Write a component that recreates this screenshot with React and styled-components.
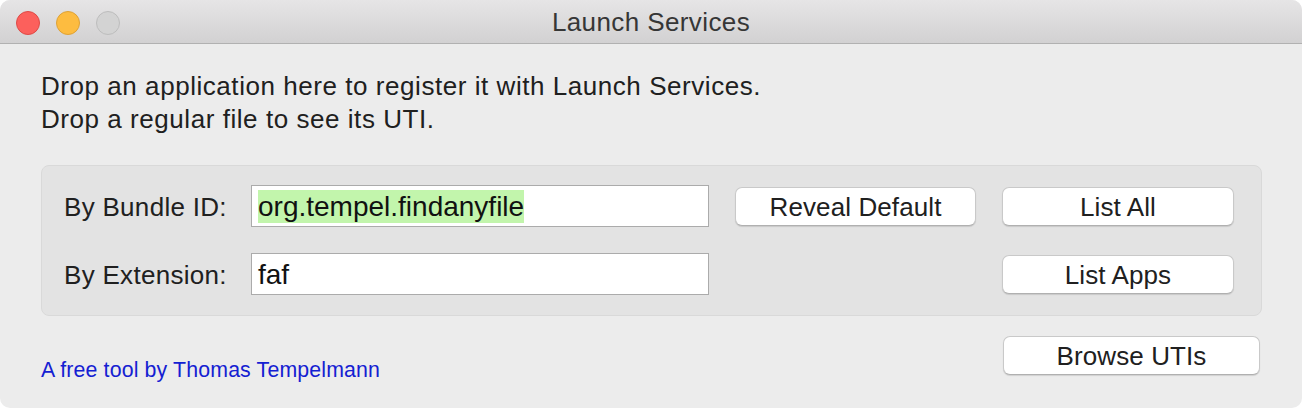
import styled, { createGlobalStyle } from "styled-components";

const GlobalStyle = createGlobalStyle`
  html, body {
    margin: 0;
    padding: 0;
    background: #ffffff;
  }
  body {
    font-family: "Liberation Sans", Arial, sans-serif;
    -webkit-font-smoothing: antialiased;
  }
`;

const App = () => {
  return (
    <>
      <GlobalStyle />
      <Window>
        <TitleBar>
          <Lights>
            <Light color="#fc605c" border="#de4a46" />
            <Light color="#fdbc40" border="#dea236" />
            <Light color="#d3d3d3" border="#bdbdbd" />
          </Lights>
          <Title>Launch Services</Title>
          <span />
        </TitleBar>

        <Content>
          <Intro>
            Drop an application here to register it with Launch Services.
            <br />
            Drop a regular file to see its UTI.
          </Intro>

          <Group>
            <Label>By Bundle ID:</Label>
            <Field>
              <Selected>org.tempel.findanyfile</Selected>
            </Field>
            <Button>Reveal Default</Button>
            <Button>List All</Button>

            <Label>By Extension:</Label>
            <Field>faf</Field>
            <span />
            <Button>List Apps</Button>
          </Group>

          <Footer>
            <Link href="#">A free tool by Thomas Tempelmann</Link>
            <Button wide>Browse UTIs</Button>
          </Footer>
        </Content>
      </Window>
    </>
  );
};

export default App;

const Window = styled.div`
  width: 1302px;
  height: 408px;
  box-sizing: border-box;
  background: #ececec;
  border-radius: 10px;
  overflow: hidden;
  display: flex;
  flex-direction: column;
`;

const TitleBar = styled.div`
  height: 43px;
  flex-shrink: 0;
  display: grid;
  grid-template-columns: 1fr auto 1fr;
  align-items: center;
  background: linear-gradient(#e6e5e6, #d2d1d2);
  border-bottom: 1px solid #b1b1b1;
  padding: 0 16px;
`;

const Lights = styled.div`
  display: flex;
  gap: 16px;
  padding-top: 2px;
`;

const Light = styled.span`
  width: 22px;
  height: 22px;
  border-radius: 50%;
  background: ${(p) => p.color};
  border: 1px solid ${(p) => p.border};
`;

const Title = styled.div`
  font-size: 26px;
  letter-spacing: 0.4px;
  color: #363636;
  padding-top: 2px;
`;

const Content = styled.div`
  padding: 26px 40px 0 41px;
`;

const Intro = styled.p`
  margin: 0;
  font-size: 26px;
  line-height: 33px;
  letter-spacing: 0.55px;
  color: #202020;
`;

const Group = styled.div`
  margin-top: 29px;
  display: grid;
  grid-template-columns: 161px 458px 241px 232px;
  grid-auto-rows: 42px;
  column-gap: 26px;
  row-gap: 26px;
  align-items: center;
  padding: 19px 22px 20px;
  background: #e3e3e3;
  border: 1px solid #d9d9d9;
  border-radius: 8px;
`;

const Label = styled.div`
  font-size: 26px;
  letter-spacing: 0.3px;
  white-space: nowrap;
  color: #202020;
  padding-top: 3px;
`;

const Field = styled.div`
  box-sizing: border-box;
  height: 42px;
  background: #fff;
  border: 1px solid #ababab;
  padding: 4px 6px 0;
  font-size: 28px;
  line-height: 33px;
  color: #111;
`;

const Selected = styled.span`
  display: inline-block;
  background: #c2f5ac;
`;

const Button = styled.button`
  box-sizing: border-box;
  height: 39px;
  width: ${(p) => (p.wide ? "257px" : "100%")};
  padding: 2px 0 0;
  background: #fff;
  border: 1px solid #c9c9c9;
  border-bottom-color: #b0b0b0;
  border-radius: 7px;
  box-shadow: 0 1px 1px rgba(0, 0, 0, 0.12);
  font-family: "Liberation Sans", Arial, sans-serif;
  font-size: 26px;
  letter-spacing: 0.1px;
  white-space: nowrap;
  color: #202020;
  cursor: default;
`;

const Footer = styled.div`
  margin: 20px 2px 0 0;
  display: flex;
  justify-content: space-between;
  align-items: flex-start;
`;

const Link = styled.a`
  margin-top: 21px;
  font-size: 21.3px;
  line-height: 26px;
  letter-spacing: 0.15px;
  color: #1420d2;
  text-decoration: none;
`;
